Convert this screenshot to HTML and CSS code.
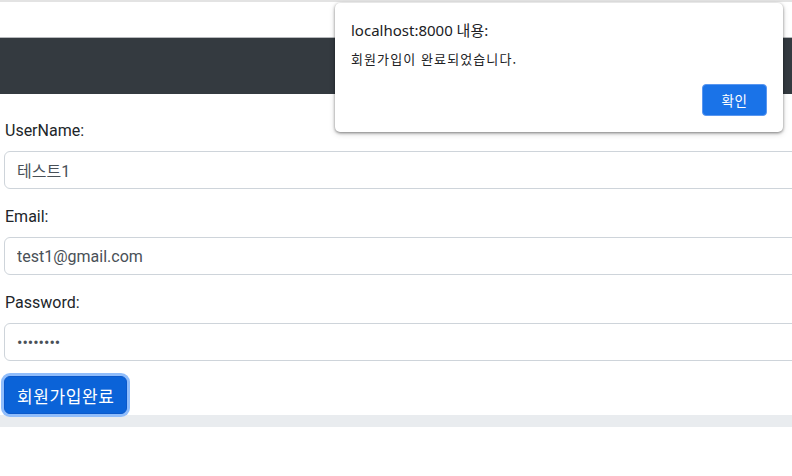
FILE: index.html
```html
<!DOCTYPE html>
<html lang="ko">
<head>
<meta charset="utf-8">
<title>회원가입</title>
<link rel="stylesheet" href="styles.css">
</head>
<body>
<div class="page">
  <div class="topstrip"></div>
  <div class="topbar"></div>
  <nav class="navbar"></nav>
  <main class="content">
    <form class="signup">
      <div class="field">
        <label class="label" for="username">UserName:</label>
        <input class="input" id="username" type="text" value="테스트1">
      </div>
      <div class="field">
        <label class="label" for="email">Email:</label>
        <input class="input" id="email" type="text" value="test1@gmail.com">
      </div>
      <div class="field">
        <label class="label" for="password">Password:</label>
        <input class="input" id="password" type="password" value="12345678">
      </div>
      <button class="submit" type="button">회원가입완료</button>
    </form>
    <div class="footer-bar"></div>
  </main>
</div>
<div class="dialog">
  <div class="dialog-title">localhost:8000 내용:</div>
  <div class="dialog-msg">회원가입이 완료되었습니다.</div>
  <div class="dialog-actions">
    <button class="dialog-btn" type="button">확인</button>
  </div>
</div>
</body>
</html>
```
FILE: styles.css
```css
html, body {
  margin: 0;
  padding: 0;
  background: #fff;
}
body {
  font-family: Roboto, "Noto Sans CJK KR", sans-serif;
  color: #212529;
  overflow: hidden;
  width: 792px;
  height: 476px;
}
.page {
  width: 792px;
  overflow: hidden;
}
.topstrip {
  height: 2px;
  background: #e3e3e3;
}
.topbar {
  height: 35px;
  background: #fff;
  border-bottom: 1px solid #b7b9bc;
}
.navbar {
  height: 56px;
  background: #343a40;
}
.content {
  padding-top: 25px;
}
.signup {
  padding-left: 4px;
  width: 830px;
}
.field {
  display: flex;
  flex-direction: column;
  margin-bottom: 16px;
}
.label {
  font-size: 16px;
  line-height: 24px;
  margin-bottom: 8px;
  padding-left: 1px;
}
.input {
  box-sizing: border-box;
  height: 38px;
  border: 1px solid #ced4da;
  border-radius: 6px;
  padding: 0 12px;
  font-family: Roboto, "Noto Sans CJK KR", sans-serif;
  font-size: 16px;
  color: #495057;
  background: #fff;
  outline: none;
}
.submit {
  box-sizing: border-box;
  height: 38px;
  padding: 0 12px;
  margin-top: -1px;
  border: 1px solid #0a58ca;
  border-radius: 6px;
  background: #0b63d8;
  color: #fff;
  font-family: "Noto Sans CJK KR", sans-serif;
  font-size: 17px;
  letter-spacing: 0.6px;
  box-shadow: 0 0 0 3px #90bdfb;
}
.footer-bar {
  margin-top: 1px;
  height: 12px;
  background: #e9ecef;
}
.dialog {
  position: absolute;
  left: 335px;
  top: 3px;
  width: 448px;
  height: 129px;
  box-sizing: border-box;
  background: #fff;
  border-radius: 5px;
  box-shadow: 0 1px 3px rgba(0,0,0,0.45), 0 2px 6px rgba(0,0,0,0.15);
  padding: 17px 16px 0 16px;
  font-family: "Noto Sans CJK KR", sans-serif;
  color: #202124;
}
.dialog-title {
  font-family: "Noto Sans", "Noto Sans CJK KR", sans-serif;
  font-size: 15px;
  line-height: 20px;
}
.dialog-msg {
  margin-top: 10px;
  font-size: 13px;
  letter-spacing: 1.1px;
  line-height: 18px;
}
.dialog-actions {
  display: flex;
  justify-content: flex-end;
  margin-top: 16px;
}
.dialog-btn {
  width: 65px;
  height: 32px;
  border: 1px solid #5a97f0;
  border-radius: 4px;
  background: #1a73e8;
  color: #fff;
  font-family: "Noto Sans CJK KR", sans-serif;
  font-size: 13.5px;
  letter-spacing: 0.5px;
  padding: 0;
}
```
